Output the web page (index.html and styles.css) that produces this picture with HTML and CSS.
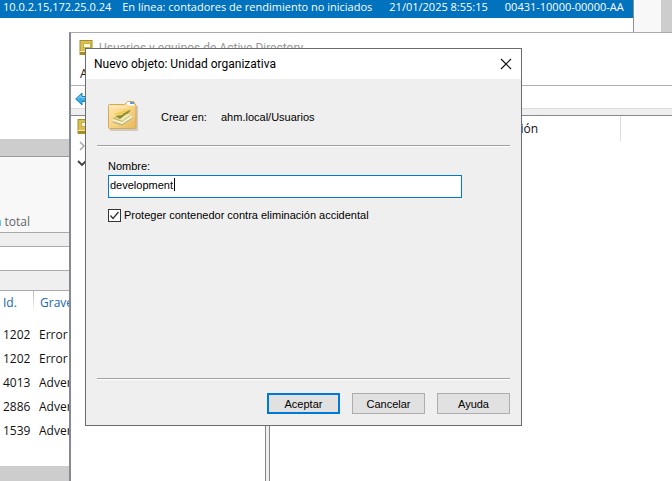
FILE: index.html
```html
<!DOCTYPE html>
<html lang="es">
<head>
<meta charset="utf-8">
<title>Usuarios y equipos de Active Directory</title>
<link rel="stylesheet" href="styles.css">
</head>
<body>
<main class="desktop">
  <section class="manager">
    <div class="servers">
      <div class="server-row">
        <span>10.0.2.15,172.25.0.24</span>
        <span>En línea: contadores de rendimiento no iniciados</span>
        <span class="updated">21/01/2025 8:55:15</span>
        <span class="product">00431-10000-00000-AA</span>
      </div>
      <div class="scroll-track"></div>
    </div>
    <div class="summary"><span class="blue">n</span> total</div>
    <div class="strip"></div>
    <div class="filter"></div>
    <div class="strip tall"></div>
    <div class="log">
      <table class="events">
        <thead><tr><th>Id.</th><th>Grave</th></tr></thead>
        <tbody>
          <tr><td>1202</td><td>Error</td></tr>
          <tr><td>1202</td><td>Error</td></tr>
          <tr><td>4013</td><td>Adver</td></tr>
          <tr><td>2886</td><td>Adver</td></tr>
          <tr><td>1539</td><td>Adver</td></tr>
        </tbody>
      </table>
    </div>
  </section>

  <section class="directory">
    <header class="dir-title">
      <svg class="book" width="14" height="15" viewBox="0 0 14 15"><rect x="1" y=".5" width="12" height="14" fill="#d9c052" stroke="#a98d2c"/><path d="M1 12h12v2H1z" fill="#a98b20"/><path d="M1 11h12v1H1z" fill="#f4e9a5"/><rect x="4.500" y="3.500" width="7" height="4" fill="#fffbe0" stroke="#c9ae48"/></svg>
      <span>Usuarios y equipos de Active Directory</span>
    </header>
    <nav class="dir-menu">A</nav>
    <div class="dir-tools">
      <svg width="16" height="14" viewBox="0 0 16 14"><path d="M.7 7 7 1v3.500h8v5H7V13z" fill="#3cabe8" stroke="#1782bd"/><path d="M3 6.500 6 3.700v2h8" fill="none" stroke="#8bd8fa"/></svg>
    </div>
    <div class="dir-gap"></div>
    <div class="dir-panes">
      <div class="tree">
        <svg class="book" width="14" height="15" viewBox="0 0 14 15"><rect x="1" y=".5" width="12" height="14" fill="#d9c052" stroke="#a98d2c"/><path d="M1 12h12v2H1z" fill="#a98b20"/><path d="M1 11h12v1H1z" fill="#f4e9a5"/><rect x="4.500" y="3.500" width="7" height="4" fill="#fffbe0" stroke="#c9ae48"/></svg>
        <svg width="10" height="10" viewBox="0 0 10 10"><path d="m3 1 4 4-4 4" fill="none" stroke="#a6a6a6" stroke-width="1.500"/></svg>
        <svg width="10" height="10" viewBox="0 0 10 10"><path d="m1 3 4 4 4-4" fill="none" stroke="#404040" stroke-width="1.800"/></svg>
      </div>
      <div class="splitter"></div>
      <div class="list"><div class="column">ión</div></div>
    </div>
  </section>

  <form class="dialog" role="dialog" aria-labelledby="dialog-title">
    <header class="dialog-title">
      <span id="dialog-title">Nuevo objeto: Unidad organizativa</span>
      <button class="close" type="button" aria-label="Cerrar"><svg width="12" height="12" viewBox="0 0 12 12"><path d="m1 1 10 10M11 1 1 11" stroke="#111" stroke-width="1.200"/></svg></button>
    </header>
    <div class="dialog-body">
      <div class="target">
        <svg width="32" height="32" viewBox="0 0 32 32">
          <defs><linearGradient id="folder" x1="0" y1="0" x2="1" y2="1"><stop offset="0" stop-color="#ffe9b0"/><stop offset=".5" stop-color="#f8d488"/><stop offset="1" stop-color="#e8b65c"/></linearGradient></defs>
          <path d="M2 29h27V5" fill="none" stroke="#cfcbc2" stroke-width="2"/>
          <path d="M.5 4.500q0-1 1-1h15l2-2q.5-1 1.500-1h5q1 0 1.500 1l.5 2q1 0 1 1v22q0 1-1 1h-25.500q-1 0-1-1z" fill="url(#folder)" stroke="#d3a95c"/>
          <path d="M19 1h7v3h-7z" fill="#fff"/><path d="M22 1h4v2h-4z" fill="#5f98da"/>
          <path d="M1.500 6h17l2-1.500h6" fill="none" stroke="#fff2c9"/>
          <path d="m5 17 10-5 9 1v3l-10 8-9-3z" fill="#c9bb6c"/>
          <path d="m5 18 9 3 10-7v3l-10 6-9-3z" fill="#f7f3d5"/>
          <path d="m5 15 10-2h9l-10 7z" fill="#ede8ae"/>
          <path d="m7 15 7-1q6-5 9-5-2 3-6 5l-5 4z" fill="#93862c"/>
          <path d="m6 13q7-3 17-5-5 3-8 4l-5 2z" fill="#f0cf45"/>
          <path d="m5 21 9 3 10-7" fill="none" stroke="#b2b47a"/>
        </svg>
        <span class="target-label">Crear en:</span>
        <span>ahm.local/Usuarios</span>
      </div>
      <hr>
      <div class="fields">
        <label class="name-label" for="name">Nombre:</label>
        <div class="name-box"><input id="name" type="text" value="development"><span class="caret"></span></div>
        <label class="protect"><input type="checkbox" checked><svg class="tick" width="13" height="13" viewBox="0 0 13 13"><path d="m2.500 6.500 2.500 3 5.500-6.500" fill="none" stroke="#333" stroke-width="1.300"/></svg><span>Proteger contenedor contra eliminación accidental</span></label>
      </div>
      <hr>
      <div class="actions">
        <button class="default" type="submit">Aceptar</button>
        <button type="button">Cancelar</button>
        <button type="button">Ayuda</button>
      </div>
    </div>
  </form>
</main>
</body>
</html>
```
FILE: styles.css
```css
* { box-sizing: border-box; }
body { margin: 0; background: #cdcdcd; color: #111; font: 12px/16px "Open Sans", "Noto Sans", sans-serif; }
.desktop { position: relative; height: 100vh; overflow: hidden; }
svg { display: block; flex: none; }
button, input { font: inherit; color: inherit; margin: 0; }

.servers { display: flex; height: 139px; background: #fff; }
.server-row { flex: 1; display: flex; gap: 11px; height: 18px; padding: 0 0 4px 3px; align-items: center; overflow: hidden; white-space: nowrap; color: #fff; background: #0072be; font-size: 11px; }
.updated, .product { margin-left: 6px; }
.scroll-track { width: 39px; border-left: 1px solid #909090; background: linear-gradient(90deg, #f8f8f8 27px, #cdcdcd 27px); }
.summary { height: 76px; margin-top: 17px; padding-top: 57px; border-top: 1px solid #999; background: #f8f8f8; color: #666; }
.blue { color: #1979ca; margin-left: -6px; }
.strip { height: 15px; border: solid #aaa; border-width: 1px 0; background: #efefef; }
.tall { height: 21px; }
.filter { height: 23px; background: #fff; }
.log { height: 175px; background: #fff; }
.events { border-collapse: collapse; }
.events th { height: 32px; padding: 0 0 8px 6px; text-align: left; font-weight: 400; color: #1769ae; }
.events th:first-child, .events td:first-child { width: 34px; padding-left: 3px; }
.events th:first-child { background: linear-gradient(#bbb, #fff) right top / 1px 22px no-repeat; }
.events td { height: 24px; padding: 0 0 0 5px; }

.directory { position: absolute; left: 69px; top: 32px; right: 0; bottom: 0; display: flex; flex-direction: column; background: #fff; border: solid #aaa; border-width: 1px 0 0 2px; border-left-color: #858a90; }
.dir-title { display: flex; gap: 6px; height: 30px; padding: 7px 0 0 8px; color: #999; font-family: Roboto, sans-serif; }
.dir-menu { height: 23px; padding: 3px 0 0 9px; border-bottom: 1px solid #b0b0b8; }
.dir-tools { height: 22px; padding: 6px 0 0 4px; }
.dir-gap { height: 8px; border-top: 1px solid #ddd; border-bottom: 1px solid #85858a; background: #efefef; }
.dir-panes { flex: 1; display: flex; }
.tree { width: 194px; padding: 3px 0 0 6px; display: flex; flex-direction: column; gap: 7px; }
.splitter { width: 5px; border: solid #85858a; border-width: 0 1px; background: #efefef; }
.list { flex: 1; }
.column { width: 351px; height: 25px; padding: 5px 82px 0 0; border-right: 1px solid #ddd; text-align: right; }

.dialog { position: absolute; left: 85px; top: 48px; width: 437px; border: 1px solid #6b6b6b; background: #efefef; color: #000; font: 11px/14px "Liberation Sans", Arial, sans-serif; }
.dialog-title { display: flex; align-items: center; justify-content: space-between; height: 30px; padding-left: 8px; background: #fff; font: 12px/16px Roboto, sans-serif; }
.close { width: 30px; height: 30px; padding: 0; border: 0; background: none; display: grid; place-items: center; }
.dialog-body { padding: 22px 11px 11px; }
.target { display: flex; align-items: center; height: 32px; padding-left: 11px; }
.target-label { width: 60px; margin-left: 21px; }
hr { height: 2px; margin: 12px 0; border: 0; border-top: 1px solid #a0a0a0; background: #fff; }
.fields { height: 207px; padding: 0 11px; display: flex; flex-direction: column; align-items: flex-start; }
.name-label { margin-bottom: 2px; }
.name-box { position: relative; width: 354px; }
.name-box input { display: block; width: 100%; height: 23px; padding: 0 1px 3px; border: 1px solid #0078d7; background: #fff; outline: 0; }
.caret { position: absolute; left: 66px; top: 3px; width: 1px; height: 13px; background: #000; }
.protect { position: relative; display: flex; align-items: center; gap: 3px; margin-top: 10px; }
.protect input { appearance: none; width: 13px; height: 13px; border: 1px solid #333; background: #fff; }
.tick { position: absolute; left: 0; }
.actions { display: flex; justify-content: flex-end; gap: 12px; margin-top: 13px; }
.actions button { width: 73px; height: 21px; padding: 0; border: 1px solid #adadad; background: #e1e1e1; }
.actions .default { border: 2px solid #0078d7; }
```
